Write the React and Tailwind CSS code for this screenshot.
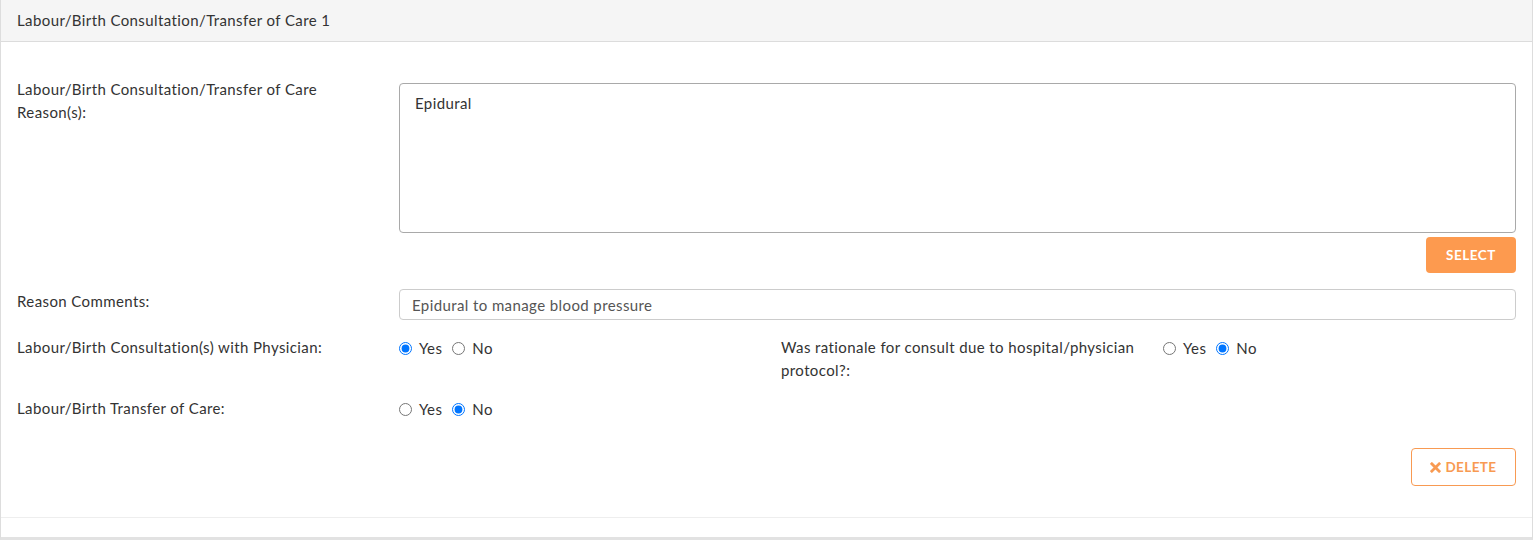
import React from 'react';

// Consultation / transfer of care panel
function Radio({ name, checked, label }) {
  return (
    <label className="flex items-center gap-[7px] mr-[10px]">
      <input type="radio" name={name} defaultChecked={checked} className="w-[13px] h-[13px] m-0" />
      <span>{label}</span>
    </label>
  );
}

function YesNo({ name, value }) {
  return (
    <div className="flex items-center h-[24px] pt-[3px]">
      <Radio name={name} checked={value === 'yes'} label="Yes" />
      <Radio name={name} checked={value === 'no'} label="No" />
    </div>
  );
}

export default function App() {
  return (
    <div
      className="bg-white text-[15px] tracking-[0.4px] leading-[23px] text-[#333]"
      style={{ fontFamily: 'Lato, "Open Sans", sans-serif' }}
    >
      <div className="border-x border-b-[3px] border-[#ddd] border-b-[#e2e2e2]">
        {/* header */}
        <div className="h-[42px] bg-[#f5f5f5] border-b border-[#dcdcdc] px-4 flex items-center">
          Labour/Birth Consultation/Transfer of Care 1
        </div>

        {/* body */}
        <div className="pt-[35px] pl-4 pr-4 pb-[31px]">
          <div className="grid grid-cols-[382px_382px_382px_1fr]">
            {/* reasons */}
            <div className="pr-[15px] pt-[1px]">Labour/Birth Consultation/Transfer of Care Reason(s):</div>
            <div className="col-span-3 pt-[6px]">
              <div className="h-[150px] border border-[#a9a9a9] rounded-[4px] px-[15px] pt-[8px]">Epidural</div>
              <div className="flex justify-end mt-[4px]">
                <button className="w-[90px] h-[36px] rounded-[4px] bg-[#fd9a4f] text-white text-[13.5px] font-bold tracking-[0.5px]">
                  SELECT
                </button>
              </div>
            </div>

            {/* comments */}
            <div className="pr-[15px] mt-[16px] pt-[1px]">Reason Comments:</div>
            <div className="col-span-3 mt-[16px]">
              <div className="h-[31px] border border-[#ccc] rounded-[4px] px-[12px] pt-[1px] flex items-center text-[#555]">
                Epidural to manage blood pressure
              </div>
            </div>

            {/* physician */}
            <div className="pr-[15px] mt-[15px] pt-[1px]">Labour/Birth Consultation(s) with Physician:</div>
            <div className="mt-[15px]">
              <YesNo name="phys" value="yes" />
            </div>
            <div className="pr-[15px] mt-[15px] pt-[1px]">Was rationale for consult due to hospital/physician protocol?:</div>
            <div className="mt-[15px]">
              <YesNo name="protocol" value="no" />
            </div>

            {/* transfer */}
            <div className="pr-[15px] mt-[14px] pt-[1px]">Labour/Birth Transfer of Care:</div>
            <div className="col-span-3 mt-[14px]">
              <YesNo name="transfer" value="no" />
            </div>
          </div>

          <div className="flex justify-end mt-[28px]">
            <button className="w-[105px] h-[38px] rounded-[4px] border border-[#f89a52] text-[#f89a52] text-[13.5px] font-bold tracking-[0.4px] flex items-center justify-center gap-[4px]">
              <svg width="11" height="11" viewBox="0 0 12 12">
                <path d="M2 2 L10 10 M10 2 L2 10" stroke="#f89a52" strokeWidth="3" strokeLinecap="square" />
              </svg>
              DELETE
            </button>
          </div>
        </div>

        {/* footer */}
        <div className="h-[20px] border-t border-[#eee]" />
      </div>
    </div>
  );
}
